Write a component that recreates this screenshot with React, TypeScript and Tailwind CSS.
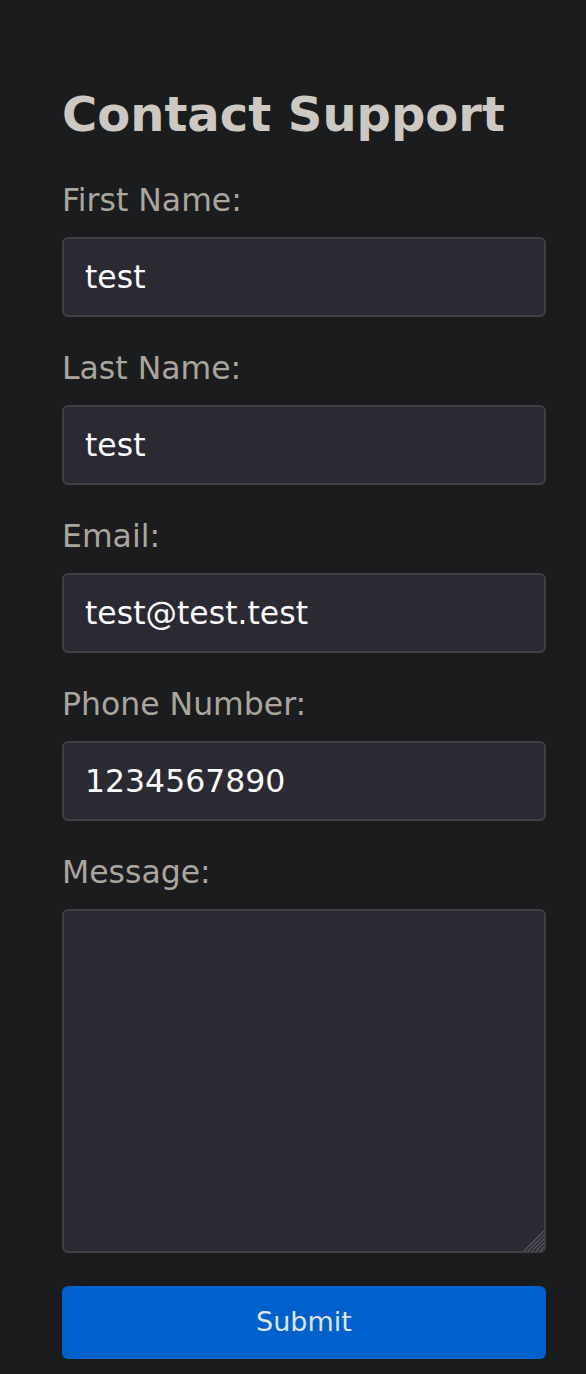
import { useState } from 'react'

const fields = [
  { id: 'first', label: 'First Name:', value: 'test' },
  { id: 'last', label: 'Last Name:', value: 'test' },
  { id: 'email', label: 'Email:', value: 'test@test.test' },
  { id: 'phone', label: 'Phone Number:', value: '1234567890' },
]

export default function App() {
  const [values, setValues] = useState<Record<string, string>>(
    Object.fromEntries(fields.map((f) => [f.id, f.value]))
  )
  const [message, setMessage] = useState('')

  return (
    <div
      className="min-h-screen bg-[#1b1c1e] pt-[86px] pb-[15px]"
      style={{ fontFamily: '"DejaVu Sans", sans-serif' }}
    >
      <form
        className="ml-[62px] flex w-[484px] flex-col"
        onSubmit={(e) => e.preventDefault()}
      >
        <h1 className="mb-[7px] text-[48px] leading-[56px] font-bold text-[#cdc8c2]">Contact Support</h1>

        {fields.map((f) => (
          <div key={f.id} className="flex flex-col">
            <label
              htmlFor={f.id}
              className="mt-[33px] mb-[19px] text-[31.5px] leading-[36px] text-[#aaa59d]"
            >
              {f.label}
            </label>
            <input
              id={f.id}
              value={values[f.id]}
              onChange={(e) => setValues({ ...values, [f.id]: e.target.value })}
              className="h-[80px] rounded-[6px] border-2 border-[#3e4044] bg-[#2b2a33] px-[21px] text-[31.5px] text-[#fbfbfe] outline-none"
            />
          </div>
        ))}

        <label htmlFor="message" className="mt-[33px] mb-[19px] text-[31.5px] leading-[36px] text-[#aaa59d]">
          Message:
        </label>
        <div className="relative flex">
          <textarea
            id="message"
            value={message}
            onChange={(e) => setMessage(e.target.value)}
            className="h-[344px] w-full resize-none rounded-[6px] border-2 border-[#3e4044] bg-[#2b2a33] px-[21px] py-[16px] text-[31.5px] text-[#fbfbfe] outline-none"
          />
          {/* resize grip */}
          <svg
            className="pointer-events-none absolute right-[2px] bottom-[2px]"
            width="22"
            height="22"
            viewBox="0 0 22 22"
          >
            <path
              d="M22 2 L2 22 M22 6 L6 22 M22 10 L10 22 M22 14 L14 22 M22 18 L18 22"
              stroke="#5b5c62"
              strokeWidth="1.2"
            />
          </svg>
        </div>

        <button
          type="submit"
          className="mt-[33px] h-[73px] rounded-[6px] bg-[#0061cd] text-[27px] text-[#dde6f2]"
        >
          Submit
        </button>
      </form>
    </div>
  )
}
